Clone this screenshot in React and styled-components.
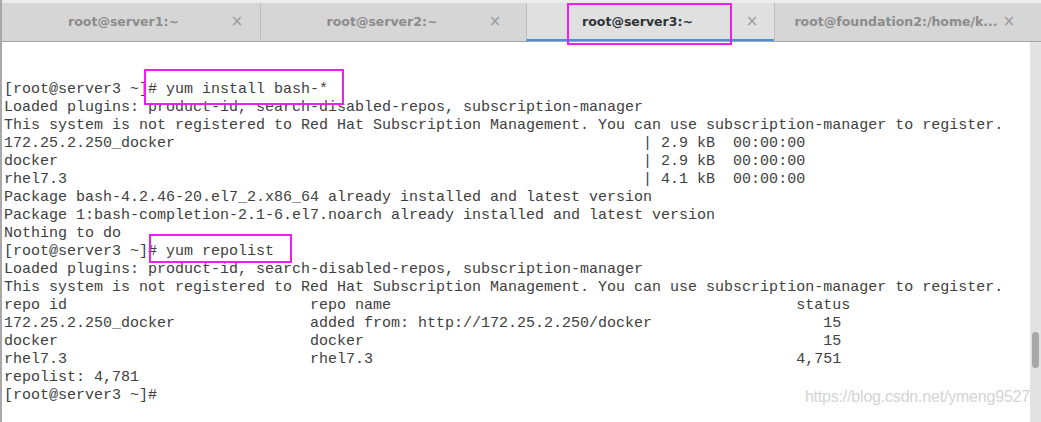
import React from "react";
import styled, { createGlobalStyle } from "styled-components";

const GlobalStyle = createGlobalStyle`
  html, body {
    margin: 0;
    padding: 0;
    background: #ffffff;
  }
`;

const Window = styled.div`
  position: relative;
  width: 1041px;
  height: 422px;
  display: flex;
  flex-direction: column;
  box-sizing: border-box;
  border-left: 2px solid #a9a9a9;
  overflow: hidden;
  background: #ffffff;
`;

const TabBar = styled.div`
  display: flex;
  height: 42px;
  box-sizing: border-box;
  border-top: 3px solid #ececec;
  border-bottom: 1px solid #a5a5a5;
  background: #d6d6d6;
  box-shadow: inset 0 1px 0 #c9c9c9;
`;

const Tab = styled.div`
  position: relative;
  display: flex;
  align-items: center;
  box-sizing: border-box;
  width: ${(p) => p.$width}px;
  padding-left: ${(p) => p.$pad}px;
  padding-right: ${(p) => p.$gap}px;
  background: ${(p) => (p.$active ? "#e0e0e0" : "#d6d6d6")};
  border-left: ${(p) => (p.$sep ? "1px solid #bcbcbc" : "none")};
  border-bottom: 2px solid ${(p) => (p.$active ? "#4a90d9" : "transparent")};
  font-family: "DejaVu Sans", "Noto Sans", sans-serif;
  font-size: 12.5px;
  font-weight: bold;
  color: ${(p) => (p.$active ? "#2e3436" : "#8c8c8c")};
`;

const TabLabel = styled.span`
  flex: 1;
  text-align: center;
  white-space: nowrap;
  overflow: hidden;
`;

const Close = styled.span`
  width: 16px;
  text-align: center;
  font-family: "DejaVu Sans", sans-serif;
  font-weight: normal;
  font-size: 15px;
  color: #9a9a9a;
`;

const Body = styled.div`
  flex: 1;
  display: flex;
  min-height: 0;
`;

const Terminal = styled.div`
  flex: 1;
  padding: 39px 0 0 2px;
  font-family: "Liberation Mono", "DejaVu Sans Mono", monospace;
  font-size: 15px;
  line-height: 18px;
  color: #404040;
`;

const Line = styled.div`
  white-space: pre;
  height: 18px;
`;

const Scrollbar = styled.div`
  width: 11px;
  background: #e2e2e2;
  display: flex;
  flex-direction: column;
  padding-top: 290px;
  box-sizing: border-box;
  align-items: center;
`;

const Thumb = styled.div`
  width: 7px;
  height: 36px;
  border-radius: 4px;
  background: #a8a8a8;
`;

const Mark = styled.div`
  position: absolute;
  left: ${(p) => p.$x}px;
  top: ${(p) => p.$y}px;
  width: ${(p) => p.$w}px;
  height: ${(p) => p.$h}px;
  box-sizing: border-box;
  border: 2px solid #f01df0;
  pointer-events: none;
`;

const Watermark = styled.div`
  position: absolute;
  right: 11px;
  top: 388px;
  font-family: "Liberation Sans", Arial, sans-serif;
  font-size: 16px;
  color: #d4d4d4;
  letter-spacing: -0.2px;
`;

const tabs = [
  { label: "root@server1:~", width: 258, pad: 16, gap: 15 },
  { label: "root@server2:~", width: 266, pad: 16, gap: 23, sep: true },
  { label: "root@server3:~", width: 248, pad: 4, gap: 14, sep: true, active: true },
  { label: "root@foundation2:/home/k...", width: 267, pad: 16, gap: 24, sep: true },
];

const row = (a, b, c) => a.padEnd(34) + b.padEnd(54) + c.padStart(5);
const size = (name, s) => name.padEnd(71) + "| " + s + "  00:00:00";

const plugins = "Loaded plugins: product-id, search-disabled-repos, subscription-manager";
const notice =
  "This system is not registered to Red Hat Subscription Management. You can use subscription-manager to register.";

const lines = [
  "[root@server3 ~]# yum install bash-*",
  plugins,
  notice,
  size("172.25.2.250_docker", "2.9 kB"),
  size("docker", "2.9 kB"),
  size("rhel7.3", "4.1 kB"),
  "Package bash-4.2.46-20.el7_2.x86_64 already installed and latest version",
  "Package 1:bash-completion-2.1-6.el7.noarch already installed and latest version",
  "Nothing to do",
  "[root@server3 ~]# yum repolist",
  plugins,
  notice,
  row("repo id", "repo name", "status"),
  row("172.25.2.250_docker", "added from: http://172.25.2.250/docker", "15"),
  row("docker", "docker", "15"),
  row("rhel7.3", "rhel7.3", "4,751"),
  "repolist: 4,781",
  "[root@server3 ~]#",
];

const App = () => {
  return (
    <>
      <GlobalStyle />
      <Window>
        <TabBar>
          {tabs.map((t) => (
            <Tab
              key={t.label}
              $width={t.width}
              $pad={t.pad}
              $gap={t.gap}
              $sep={t.sep}
              $active={t.active}
            >
              <TabLabel>{t.label}</TabLabel>
              <Close>×</Close>
            </Tab>
          ))}
        </TabBar>
        <Body>
          <Terminal>
            {lines.map((l, i) => (
              <Line key={i}>{l}</Line>
            ))}
          </Terminal>
          <Scrollbar>
            <Thumb />
          </Scrollbar>
        </Body>
        <Watermark>https://blog.csdn.net/ymeng9527</Watermark>
        <Mark $x={565} $y={3} $w={165} $h={42} />
        <Mark $x={142} $y={69} $w={200} $h={36} />
        <Mark $x={147} $y={234} $w={143} $h={29} />
      </Window>
    </>
  );
};

export default App;
